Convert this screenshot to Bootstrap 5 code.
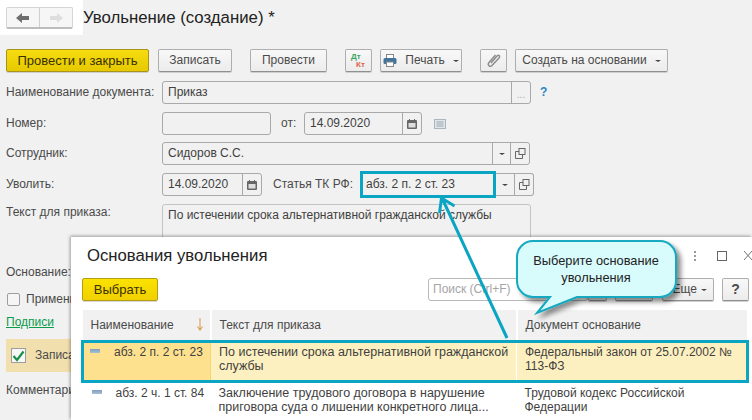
<!DOCTYPE html>
<html lang="ru"><head><meta charset="utf-8">
<link href="https://cdn.jsdelivr.net/npm/bootstrap@5.3.0/dist/css/bootstrap.min.css" rel="stylesheet">
<style>
html,body{margin:0;height:420px;overflow:hidden}
body{position:relative;background:#f1f1f1;font:12px/1.2 "Liberation Sans",Arial,sans-serif;color:#4a4a4a;width:752px}
.head{height:35px}
.patch{width:83px;height:35px;background:#fff;padding:7px 0 0 6px;flex:none}
.navb{width:67px;height:22px;border:1px solid #d5d5d5;border-bottom:2px solid #bdbdbd;border-radius:2px;background:#f6f6f6}
.navb span{flex:1;display:flex;align-items:center;justify-content:center}
.navb span+span{border-left:1px solid #cfcfcf}
.ttl{font-size:16.8px;color:#222;margin-top:8px}
.tbar{height:23px;margin:14px 0 0 6px}
.bt{height:23px;border:1px solid #aeaeae;border-bottom-color:#8f8f8f;border-radius:2px;background:linear-gradient(#f8f8f8,#ececec);color:#4a4a4a;display:flex;align-items:center;justify-content:center;flex:none;box-shadow:0 1px 0 #cfcfcf}
.prim{background:linear-gradient(#f6dc10,#e6c900);border-color:#a8941a;color:#3a3000;font-size:13px}
.caret{width:0;height:0;border:3px solid transparent;border-top:2px solid #444;border-bottom:0;display:inline-block}
.w143{width:143px}.w74{width:74px}.w77{width:77px}.w27{width:27px}.w82{width:82px}.w153{width:153px}
.ml9{margin-left:9px}.ml18{margin-left:18px}.ml8{margin-left:8px}
.dk{font-size:8px;font-weight:700;line-height:8px;text-align:left;width:15px}
.dk i{font-style:normal;color:#3aa563;display:block}.dk b{color:#e2604c;display:block;padding-left:5px}
.line{height:23px;padding-left:6px;display:flex;align-items:center}
.r1{margin-top:9px}.r2{margin-top:8px}.r3{margin-top:7px}.r4{margin-top:8px}
.lab{width:156px;flex:none}
.fld{height:23px;border:1px solid #a9a9a9;border-radius:3px;display:flex;align-items:stretch;color:#3f3f3f;background:#f1f1f1;flex:none}
.fld>.v{flex:1;padding:0 0 0 5px;display:flex;align-items:center;white-space:nowrap;min-width:0}
.fld>.s{border-left:1px solid #a9a9a9;display:flex;align-items:center;justify-content:center;flex:none}
.f369{width:369px}.f109{width:109px}.f118{width:118px}.f368{width:368px}.f100{width:100px}
.s19{width:19px}.s18{width:18px}
.lg{color:#aaa;font-size:10px;padding-top:4px}
.help{color:#2a87c4;font-weight:700;margin-left:9px;font-size:12px}
.ot{margin-left:10px;width:23px;flex:none}
.nt{margin-left:12px}
.st{margin-left:11px;width:87px;flex:none}
.hot{width:136px;height:27px;border:3px solid #0aa5c3;padding-left:3px;display:flex;align-items:center;color:#3f3f3f;flex:none;margin:-1px 0 0 0}
.endf{width:38px;border-left:0;border-radius:0 3px 3px 0}
.endf>.s:first-child{border-left:0}
.area{height:58px;width:369px;border:1px solid #c4c4c4;border-radius:3px;padding:3px 5px;color:#3f3f3f;flex:none}
.tall{height:58px;align-items:flex-start}
.tall .lab{padding-top:1px}
.basis{height:20px;padding-left:6px;display:flex;align-items:center}
.chkrow{height:14px;margin-top:10px;padding-left:7px;display:flex;align-items:center}
.cb{width:13px;height:13px;border:1px solid #9e9e9e;border-radius:2px;background:#f5f5f5;flex:none;margin-right:6px}
.sign{margin:9px 0 0 6px;color:#0b9c4b;text-decoration:underline;height:15px;display:block}
.orng{margin:9px 0 0 6px;width:70px;height:33px;background:#f2dfae;display:flex;align-items:center;padding-left:5px}
.cb2{width:15px;height:15px;border:1px solid #9e9e9e;background:#f7f7f7;margin-right:9px;flex:none;display:flex;align-items:center;justify-content:center}
.cmt{margin:11px 0 0 6px}
.win{position:absolute;left:71px;top:237px;right:0;bottom:0;background:#fff;box-shadow:-1px -1px 3px rgba(0,0,0,.35);overflow:hidden}
.wt{font-size:16.7px;color:#222;padding:9px 0 0 16px;height:41px}
.wbar{padding-left:11px;height:23px}
.pick{width:76px;height:23px;border:1px solid #b39d12;border-radius:2px;background:linear-gradient(#fbe200,#f1d000);color:#3a3000;font-size:13px;display:flex;align-items:center;justify-content:center;flex:none;box-shadow:0 1px 0 #d9d9d9}
.srch{position:absolute;left:357px;top:41px;width:160px;height:23px;border:1px solid #b9b9b9;border-radius:3px;padding-left:4px;display:flex;align-items:center;color:#a5a5a5;background:#fff}
.b1{position:absolute;left:517px;top:41px;width:19px}
.b2{position:absolute;left:544px;top:41px;width:38px}
.more{position:absolute;left:591px;top:41px;width:52px;padding-right:6px;justify-content:flex-end;gap:4px}
.q{position:absolute;left:651px;top:41px;width:27px;font-weight:700;font-size:14px}
.tb{position:absolute;left:10px;top:73px;width:668px;table-layout:fixed;border-collapse:collapse;margin:0;color:#3f3f3f;line-height:14px}
.tb th,.tb td{padding:0 0 0 8px;border:0;font-weight:400;vertical-align:top}
.tb th{background:#f1f1f1;height:31px;vertical-align:middle;border-right:2px solid #fff;border-bottom:2px solid #fff;color:#4a4a4a;position:relative}
.tb th .so{position:absolute;right:6px;top:7px}
.tb td:nth-child(2){font-size:12.5px}
.tb tr.sel td{background:#fdf0c0;border-top:3px solid #0aa5c3;border-bottom:3px solid #0aa5c3;height:40px;padding-top:2px;border-right:1px solid #fff}
.tb tr.sel td:first-child{background:#fde18f;border-left:3px solid #0aa5c3;padding-left:5px;border-right:1px solid #f5d570}
.tb tr.sel td:last-child{border-right:3px solid #0aa5c3}
.tb tr.oth td{height:39px;padding-top:3px;border-bottom:1px solid #dcdcdc}
.nm{display:flex;justify-content:flex-start}
.dash{width:10px;height:4px;background:linear-gradient(#7f9fc0,#a9bfd4);margin:4px 14px 0 1px;flex:none}
.over{position:absolute;left:0;top:0;width:752px;height:420px;pointer-events:none}
.say{position:absolute;left:516px;top:252px;width:160px;text-align:center;color:#222;line-height:17px;font-size:12.8px}
</style></head>
<body>
<div class="head d-flex">
  <div class="patch"><div class="navb d-flex">
    <span><svg width="14" height="10" viewBox="0 0 14 10"><path d="M0 5 6 0v3h7v4H6v3z" fill="#6e6e6e"/></svg></span>
    <span><svg width="14" height="10" viewBox="0 0 14 10"><path d="M14 5 8 0v3H1v4h7v3z" fill="#dedede"/></svg></span>
  </div></div>
  <div class="ttl">Увольнение (создание) *</div>
</div>
<div class="tbar d-flex">
  <div class="bt prim w143">Провести и закрыть</div>
  <div class="bt w74 ml9">Записать</div>
  <div class="bt w77 ml18">Провести</div>
  <div class="bt w27 ml18"><div class="dk"><i>Дт</i><b>Кт</b></div></div>
  <div class="bt w82 ml8 gap-2">
    <svg width="14" height="13" viewBox="0 0 14 13"><rect x="3.500" y=".5" width="7" height="4" fill="#fff" stroke="#888"/><rect x="0.5" y="4" width="13" height="6" rx="1.5" fill="#41749c"/><rect x="3.500" y="8" width="7" height="4.500" fill="#fff" stroke="#888"/></svg>
    <span>Печать</span><span class="caret"></span>
  </div>
  <div class="bt w27 ml18"><svg width="14" height="15" viewBox="0 0 14 15" fill="none" stroke="#8d8d8d" stroke-width="1.5"><path d="M4 10 10 3c1.500-1.500 3.500 0 2.200 1.700L5 12.500c-2 2-5-.5-3-3L8.500 2"/></svg></div>
  <div class="bt w153 ml8 gap-2"><span>Создать на основании</span><span class="caret"></span></div>
</div>

<div class="line r1">
  <div class="lab">Наименование документа:</div>
  <div class="fld f369"><div class="v">Приказ</div><div class="s s19 lg">...</div></div>
  <div class="help">?</div>
</div>
<div class="line r2">
  <div class="lab">Номер:</div>
  <div class="fld f109"></div>
  <div class="ot">от:</div>
  <div class="fld f118"><div class="v">14.09.2020</div><div class="s s19"><svg width="10" height="10" viewBox="0 0 10 10"><rect y="1" width="10" height="9" rx="1" fill="#666"/><rect x="1.500" y="4" width="7" height="4.500" fill="#ddd"/><path d="M2.500 0v2M7.500 0v2" stroke="#666"/></svg></div></div>
  <svg class="nt" width="12" height="10" viewBox="0 0 12 10"><rect x=".5" y=".5" width="11" height="9" fill="#dfe6ec" stroke="#a9b6c0"/><path d="M2.500 3h7M2.500 5h7M2.500 7h7" stroke="#9aa7b0"/></svg>
</div>
<div class="line r3">
  <div class="lab">Сотрудник:</div>
  <div class="fld f368"><div class="v">Сидоров С.С.</div>
    <div class="s s18"><span class="caret"></span></div>
    <div class="s s19"><svg width="11" height="11" viewBox="0 0 11 11" fill="none" stroke="#666"><rect x="4" y=".5" width="6" height="6"/><path d="M4 3.500H.5v7h7V7"/></svg></div></div>
</div>
<div class="line r4">
  <div class="lab">Уволить:</div>
  <div class="fld f100"><div class="v">14.09.2020</div><div class="s s19"><svg width="10" height="10" viewBox="0 0 10 10"><rect y="1" width="10" height="9" rx="1" fill="#666"/><rect x="1.500" y="4" width="7" height="4.500" fill="#ddd"/><path d="M2.500 0v2M7.500 0v2" stroke="#666"/></svg></div></div>
  <div class="st">Статья ТК РФ:</div>
  <div class="hot">абз. 2 п. 2 ст. 23</div>
  <div class="fld endf"><div class="s s18"><span class="caret"></span></div><div class="s s19"><svg width="11" height="11" viewBox="0 0 11 11" fill="none" stroke="#666"><rect x="4" y=".5" width="6" height="6"/><path d="M4 3.500H.5v7h7V7"/></svg></div></div>
</div>
<div class="line r4 tall">
  <div class="lab">Текст для приказа:</div>
  <div class="area">По истечении срока альтернативной гражданской службы</div>
</div>
<div class="basis">Основание:</div>
<div class="chkrow"><span class="cb"></span>Применить</div>
<a class="sign">Подписи</a>
<div class="orng"><span class="cb2"><svg width="13" height="12" viewBox="0 0 13 12"><path d="M1.500 6 5 10 11.500 1.500" fill="none" stroke="#17904a" stroke-width="2.200"/></svg></span>Записать</div>
<div class="cmt">Комментарий:</div>

<div class="win">
  <div class="wt">Основания увольнения</div>
  <div class="wbar d-flex"><div class="pick">Выбрать</div></div>
  <div class="srch">Поиск (Ctrl+F)</div>
  <div class="bt b1"></div>
  <div class="bt b2"></div>
  <div class="bt more">Еще <span class="caret"></span></div>
  <div class="bt q">?</div>
  <table class="table tb">
    <colgroup><col style="width:128px"><col style="width:306px"><col></colgroup>
    <thead><tr><th>Наименование<span class="so"><svg width="8" height="13" viewBox="0 0 8 13"><path d="M4 0v11M1.500 8.500 4 12l2.500-3.500" fill="none" stroke="#d8a050" stroke-width="1.100"/></svg></span></th><th>Текст для приказа</th><th>Документ основание</th></tr></thead>
    <tbody>
      <tr class="sel"><td><div class="nm"><span class="dash"></span><span>абз. 2 п. 2 ст. 23</span></div></td><td>По истечении срока альтернативной гражданской службы</td><td>Федеральный закон от 25.07.2002 № 113-ФЗ</td></tr>
      <tr class="oth"><td><div class="nm"><span class="dash"></span><span>абз. 2 ч. 1 ст. 84</span></div></td><td>Заключение трудового договора в нарушение приговора суда о лишении конкретного лица...</td><td>Трудовой кодекс Российской Федерации</td></tr>
    </tbody>
  </table>
</div>

<svg class="over" viewBox="0 0 752 420">
  <defs><filter id="sh" x="-10%" y="-10%" width="125%" height="130%"><feDropShadow dx="4" dy="4" stdDeviation="2.500" flood-color="#000" flood-opacity=".45"/></filter></defs>
  <path d="M507 338 442 198M441.500 198l-2 15M441.500 198l13 8" fill="none" stroke="#0aa5c3" stroke-width="3"/>
  <path d="M533 241H660a16 16 0 0 1 16 16V281a16 16 0 0 1-16 16H577L537 313 550 297H533a16 16 0 0 1-16-16V257a16 16 0 0 1 16-16Z" fill="#d8fbfc" stroke="#12a9bf" stroke-width="2" filter="url(#sh)"/>
  <circle cx="695" cy="256" r="1" fill="#777"/><circle cx="695" cy="252" r="1" fill="#777"/><circle cx="695" cy="260" r="1" fill="#777"/>
  <rect x="717.500" y="251.500" width="9" height="9" fill="none" stroke="#666"/>
  <path d="M744 251 752 260M752 251 744 260" stroke="#777" fill="none"/>
</svg>
<div class="say">Выберите основание<br>увольнения</div>
</body></html>
